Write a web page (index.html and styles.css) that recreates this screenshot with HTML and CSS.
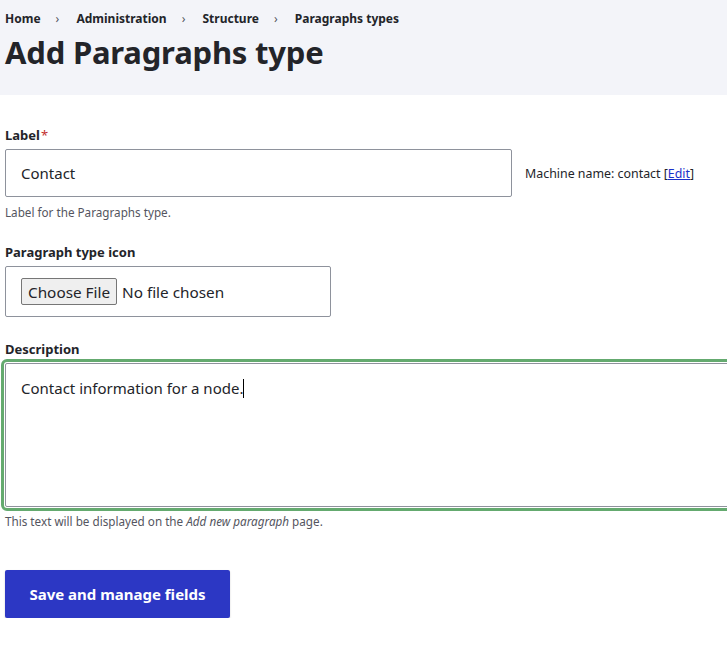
FILE: index.html
```html
<!DOCTYPE html>
<html lang="en">
<head>
<meta charset="utf-8">
<title>Add Paragraphs type</title>
<link rel="stylesheet" href="styles.css">
</head>
<body>
<header class="page-header">
  <nav class="breadcrumb">
    <a href="#">Home</a><span class="sep">›</span>
    <a href="#">Administration</a><span class="sep">›</span>
    <a href="#">Structure</a><span class="sep">›</span>
    <a href="#">Paragraphs types</a>
  </nav>
  <h1 class="title">Add Paragraphs type</h1>
</header>
<main class="content">
  <form class="form">
    <div class="field field-label">
      <label class="label required" for="label">Label</label>
      <div class="row">
        <input id="label" class="input" type="text" value="Contact">
        <span class="machine">Machine name: contact [<a href="#">Edit</a>]</span>
      </div>
      <div class="help">Label for the Paragraphs type.</div>
    </div>
    <div class="field field-icon">
      <label class="label" for="icon">Paragraph type icon</label>
      <div class="filebox">
        <input id="icon" class="file" type="file">
      </div>
    </div>
    <div class="field field-desc">
      <label class="label">Description</label>
      <div class="textarea" role="textbox">Contact information for a node.<span class="caret"></span></div>
      <div class="help">This text will be displayed on the <em>Add new paragraph</em> page.</div>
    </div>
    <div class="actions">
      <button type="button" class="button">Save and manage fields</button>
    </div>
  </form>
</main>
</body>
</html>
```
FILE: styles.css
```css
html, body {
  margin: 0;
  padding: 0;
  background: #fff;
  overflow: hidden;
}
body {
  font-family: "Noto Sans", "Open Sans", sans-serif;
  color: #232429;
}
.page-header {
  background: #f3f4f9;
  padding: 9px 5px 23px;
}
.breadcrumb {
  font-size: 12px;
  font-weight: 700;
  line-height: 19px;
}
.breadcrumb a {
  color: #232429;
  text-decoration: none;
}
.breadcrumb .sep {
  display: inline-block;
  color: #545560;
  margin: 0 14px 0 15px;
  font-weight: 400;
}
.title {
  margin: 4px 0 0;
  font-size: 31px;
  line-height: 40px;
  font-weight: 700;
  letter-spacing: -0.2px;
}
.content {
  padding: 30px 0 0 5px;
  overflow: hidden;
}
.label {
  display: block;
  font-size: 13px;
  font-weight: 700;
  line-height: 20px;
  margin-bottom: 4px;
}
.required::after {
  content: "*";
  color: #c3302e;
  margin-left: 1px;
  font-weight: 400;
}
.row {
  display: flex;
  align-items: center;
  gap: 13px;
}
.input {
  box-sizing: border-box;
  width: 507px;
  height: 48px;
  margin: 0;
  border: 1px solid #8e929c;
  border-radius: 2px;
  padding: 0 15px;
  font-family: inherit;
  font-size: 15px;
  color: #232429;
  background: #fff;
}
.machine {
  font-size: 12.4px;
  color: #232429;
}
.machine a {
  color: #1b31c9;
}
.help {
  font-size: 11.7px;
  line-height: 18px;
  color: #545560;
  margin-top: 6px;
}
.field-icon {
  margin-top: 21px;
}
.filebox {
  box-sizing: border-box;
  width: 326px;
  height: 51px;
  border: 1px solid #8e929c;
  border-radius: 2px;
  padding: 11px 15px 0;
}
.file {
  font-family: inherit;
  font-size: 15.3px;
  color: #232429;
}
.file::file-selector-button {
  font-family: inherit;
  font-size: 15.3px;
  height: 27px;
  padding: 0 6px;
  margin-right: 5px;
  background: #efefef;
  border: 1px solid #767676;
  border-radius: 2px;
  color: #232429;
}
.field-desc {
  margin-top: 22px;
}
.textarea {
  box-sizing: border-box;
  width: 740px;
  height: 144px;
  border: 1px solid #8e929c;
  border-radius: 2px;
  padding: 13px 15px;
  font-size: 15px;
  line-height: 22px;
  outline: 3px solid #64aa6f;
  outline-offset: 1px;
  margin-top: 3px;
}
.caret {
  display: inline-block;
  width: 1px;
  height: 19px;
  background: #000;
  vertical-align: -4px;
}
.field-desc .help {
  margin-top: 5px;
}
.actions {
  margin-top: 40px;
}
.button {
  width: 225px;
  height: 48px;
  border: 0;
  border-radius: 2px;
  background: #2c37c4;
  color: #fff;
  font-family: inherit;
  font-size: 15px;
  font-weight: 700;
  box-shadow: 0 1px 2px rgba(0,0,0,0.2);
}
```
